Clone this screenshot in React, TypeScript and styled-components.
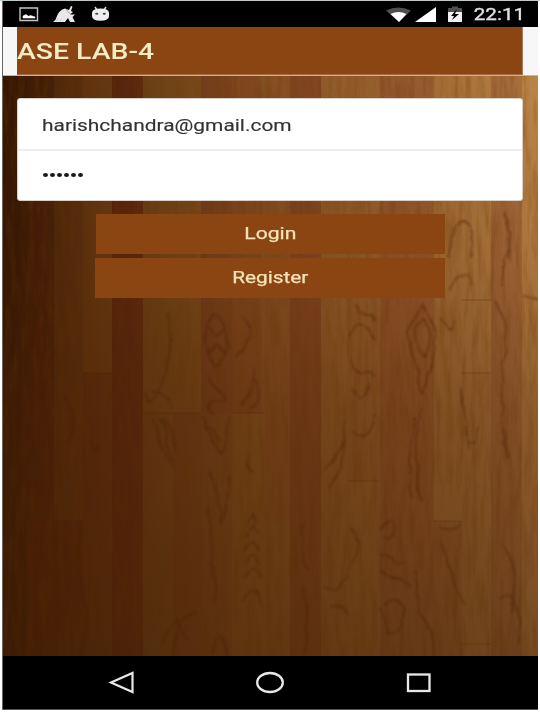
import React from "react";
import styled, { createGlobalStyle } from "styled-components";

const Global = createGlobalStyle`
  * { box-sizing: border-box; }
  html, body { margin: 0; background: #fff; }
  body { font-family: Roboto, "Liberation Sans", sans-serif; }
`;

const Page = styled.div`
  width: 540px;
  height: 712px;
  padding: 1px 2px 2px;
  overflow: hidden;
  background: #fff;
  box-shadow: inset 0 1px 0 #c3cbc8;
`;

const Phone = styled.div`
  display: flex;
  flex-direction: column;
  width: 536px;
  height: 709px;
  background: #000;
  border-left: 1px solid #6a6563;
  border-bottom: 1px solid #555;
`;

const StatusBar = styled.header`
  display: flex;
  align-items: center;
  justify-content: space-between;
  height: 26px;
  padding: 0 13px 0 16px;
  color: #e4e4e4;
`;

const Icons = styled.div<{ $gap: number }>`
  display: flex;
  align-items: center;
  gap: ${(p) => p.$gap}px;
`;

const Wide = styled.span<{ $origin?: string; $ratio?: number }>`
  display: inline-block;
  white-space: nowrap;
  transform: scaleX(${(p) => p.$ratio ?? 1.28});
  transform-origin: ${(p) => p.$origin ?? "left"} center;
`;

const Clock = styled.div`
  padding-top: 2px;
  font-size: 16.5px;
  line-height: 26px;
  -webkit-text-stroke: 0.3px #e4e4e4;
`;

const Header = styled.div`
  height: 49px;
  padding: 0 15px 0 14px;
  background: #f7f7f7;
  border-bottom: 1px solid #c3b6ab;
`;

const Title = styled.h1`
  height: 48px;
  margin: 0;
  padding-top: 1px;
  border-right: 1px solid #a87c5b;
  border-bottom: 1px solid #a06a43;
  background: #8b4513;
  color: #f5ebc5;
  font-size: 22px;
  font-weight: 500;
  line-height: 47px;
`;

const Content = styled.main`
  position: relative;
  height: 580px;
  padding: 22px 15px 0 14px;
  overflow: hidden;
  background: #5a2f10;
`;

const Backdrop = styled.svg`
  position: absolute;
  inset: 0;
  width: 535px;
  height: 580px;
`;

const Form = styled.form`
  position: relative;
  display: flex;
  flex-direction: column;
  align-items: center;
`;

const Fields = styled.div`
  width: 506px;
  height: 103px;
  border: 1px solid #d9cfc7;
  border-radius: 3px;
  background: #fff;
  color: #333;
`;

const Field = styled.div`
  display: flex;
  align-items: center;
  height: 50px;
  padding: 3px 0 0 24px;
  font-size: 16.5px;
  -webkit-text-stroke: 0.15px #333;

  & + & {
    padding-top: 0;
    border-top: 2px solid #ededed;
  }
`;

const Dots = styled.div`
  display: flex;
  gap: 2px;
  padding-left: 1px;
`;

const Dot = styled.i`
  width: 5px;
  height: 4px;
  border-radius: 50%;
  background: #181818;
`;

const Actions = styled.div`
  display: flex;
  flex-direction: column;
  align-items: flex-end;
  gap: 4px;
  margin-top: 13px;
`;

const Button = styled.button<{ $width: number }>`
  width: ${(p) => p.$width}px;
  height: 40px;
  padding: 0 0 2px;
  border: 0;
  background: #8b4513;
  color: #f5e3b8;
  font: 400 16.5px Roboto, sans-serif;
  -webkit-text-stroke: 0.25px #f5e3b8;
`;

const NavBar = styled.nav`
  display: flex;
  align-items: center;
  justify-content: space-between;
  flex: 1;
  padding: 0 106px 2px 105px;
`;

type Plank = [number, number, number, number, string];

/* x, y, width, height, tint */
const planks: Plank[] = [
  [0, 0, 24, 580, "#20090038"], [24, 0, 27, 445, "#35080028"],
  [51, 0, 29, 445, "#81500a16"], [80, 0, 29, 297, "#98661426"],
  [80, 297, 29, 148, "#61200a26"], [24, 445, 56, 135, "#52100038"],
  [80, 445, 29, 135, "#61280a26"], [109, 0, 31, 580, "#4404004a"],
  [140, 0, 30, 337, "#936c1020"], [170, 0, 28, 337, "#9a6a1220"],
  [140, 337, 30, 243, "#80601820"], [170, 337, 28, 243, "#681e0a20"],
  [198, 0, 31, 338, "#651a102c"], [229, 0, 30, 337, "#7b280a28"],
  [198, 338, 31, 242, "#74381222"], [229, 337, 34, 243, "#98661428"],
  [262, 0, 25, 445, "#8a3a1020"], [262, 445, 25, 135, "#88601220"],
  [287, 0, 31, 580, "#64180a48"], [318, 0, 26, 580, "#90601820"],
  [344, 0, 33, 405, "#8040101c"], [344, 405, 33, 175, "#90601a28"],
  [377, 0, 54, 580, "#72241038"], [431, 0, 28, 445, "#a06c2820"],
  [431, 445, 28, 135, "#6d281030"], [459, 0, 29, 297, "#b0803830"],
  [459, 297, 29, 283, "#98602820"], [488, 0, 31, 580, "#742b1940"],
  [519, 0, 17, 580, "#b5783840"],
];

const contours = [
  "M39 222 Q27 258 30 284 T39 319 Q51 290 48 263 Z M38 253 Q31 269 39 284 Q45 272 38 253Z M30 297 Q32 315 39 324 Q43 316 47 298 M39 0 Q31 21 38 60 T32 125 T43 206",
  "M211 240 C195 255 202 280 213 289 C230 280 227 242 211 240Z M205 253 L213 262 L221 253 M204 277 L213 270 L221 277 M205 300 C210 314 222 313 222 325 C208 322 197 335 211 338 M200 341 Q207 365 219 377 Q228 360 226 341 M205 349 Q212 361 218 364",
  "M236 241 C247 244 250 260 240 274 L233 281 M250 293 Q254 306 238 330 M253 301 Q260 320 248 335 M247 380 Q239 391 252 397",
  "M420 228 L404 257 Q407 278 420 318 Q434 277 431 251 Z M421 243 Q406 257 413 268 T421 281 Q429 265 427 252 Z M418 333 Q407 364 418 424 M412 340 Q402 380 409 420",
  "M352 230 C355 247 371 230 371 245 M347 260 C355 243 369 247 371 263 M347 284 Q352 302 360 296 T371 300 M350 312 Q359 334 366 308 M350 354 Q366 371 371 338",
  "M165 238 Q170 290 157 312 T142 318 M147 316 Q166 315 171 335 M150 342 Q159 370 169 394 M155 341 Q169 362 168 388 M160 343 Q174 361 174 374",
  "M444 180 Q451 143 461 145 T469 181 M446 213 Q464 188 469 209 M436 242 Q449 265 453 242 M461 350 C466 374 473 373 475 349 M457 310 Q464 348 466 374",
  "M500 137 Q513 155 506 172 T499 212 M494 225 Q507 251 501 290 T504 383 M510 156 Q501 167 508 184 M520 220 Q532 225 536 224",
  "M244 450 L250 438 L255 449 M243 462 L250 450 L256 460 M242 475 Q250 459 257 475 M242 488 Q250 469 257 488 M242 502 Q251 481 258 502 M239 526 Q253 500 260 531",
  "M205 395 Q219 423 218 445 T228 400 M204 430 Q210 475 212 525 M160 570 Q173 522 183 565 M170 580 Q174 540 193 533 M210 580 Q217 541 225 580",
  "M377 455 Q388 439 391 452 T380 460 M377 480 C391 474 390 496 402 486 M377 495 C391 507 397 495 407 513 M383 530 Q404 510 399 549 Q384 574 379 532 M414 494 Q410 526 422 548 T430 579",
  "M322 512 Q337 519 345 500 M324 529 Q341 526 346 540 M322 394 Q335 380 342 364 M326 410 Q342 389 343 346 M350 450 Q362 470 344 493",
  "M435 451 Q448 459 456 449 M438 468 Q454 512 461 532 M500 467 Q518 502 509 535 M496 523 Q519 506 515 568 M300 448 Q296 490 307 494 M300 510 Q308 542 301 580",
  "M13 460 Q33 490 19 524 T35 580 M78 450 Q70 484 80 515 T78 580 M5 455 C26 458 20 472 5 477 M60 320 Q80 346 65 367 M87 365 Q91 381 95 366",
];

const Wood = () => (
  <Backdrop viewBox="0 0 535 580" preserveAspectRatio="none" aria-hidden="true">
    <defs>
      <linearGradient id="across">
        <stop offset="0" stopColor="#3a1a05" />
        <stop offset=".2" stopColor="#5c3012" />
        <stop offset=".42" stopColor="#7d4c20" />
        <stop offset=".65" stopColor="#955f2e" />
        <stop offset=".88" stopColor="#aa743e" />
        <stop offset="1" stopColor="#be8a4f" />
      </linearGradient>
      <linearGradient id="down" x1="0" y1="0" x2="0" y2="1">
        <stop offset="0" stopColor="#4b2105" stopOpacity="0" />
        <stop offset=".3" stopColor="#4b2105" stopOpacity=".14" />
        <stop offset=".58" stopColor="#4b2105" stopOpacity=".4" />
        <stop offset="1" stopColor="#432004" stopOpacity=".58" />
      </linearGradient>
      <filter id="grain" x="0" y="0" width="100%" height="100%">
        <feTurbulence type="fractalNoise" baseFrequency=".16 .022" numOctaves="4" seed="12" />
        <feColorMatrix values="0 0 0 0 .16  0 0 0 0 .04  0 0 0 0 0  1.8 0 0 0 -.72" />
      </filter>
      <filter id="knots" x="0" y="0" width="100%" height="100%">
        <feTurbulence type="fractalNoise" baseFrequency=".05" numOctaves="3" seed="4" result="n" />
        <feDisplacementMap in="SourceGraphic" in2="n" scale="8" xChannelSelector="R" yChannelSelector="G" />
        <feGaussianBlur stdDeviation=".8" />
      </filter>
    </defs>
    <rect width="535" height="580" fill="url(#across)" />
    {planks.map(([x, y, w, h, tint], i) => (
      <rect key={i} x={x} y={y} width={w} height={h} fill={tint} />
    ))}
    <rect width="535" height="580" filter="url(#grain)" opacity=".38" />
    <g fill="none" stroke="#421800" strokeWidth="1.8" opacity=".42" filter="url(#knots)">
      {contours.map((d) => <path key={d} d={d} />)}
    </g>
    <path
      d="M80 297H109M140 337H198M229 337H262M51 445H80M431 445H459M459 224H488M459 297H488M344 405H377M459 568H488"
      stroke="#421800"
      opacity=".3"
    />
    <rect width="535" height="580" fill="url(#down)" />
  </Backdrop>
);

const PictureIcon = () => (
  <svg width="20" height="16" viewBox="0 0 20 16">
    <path d="M1 2H18.5V14.5H1Z" fill="none" stroke="#c5c5c5" strokeWidth="1.4" />
    <path d="M4 12V10L7 8.5L9.5 10.3L11.5 9.5L16 11V12Z" fill="#fff" stroke="#fff" strokeWidth=".6" />
  </svg>
);

const CleanerIcon = () => (
  <svg width="24" height="18" viewBox="0 0 24 18">
    <path d="M0 17 Q3 15 4 11 Q6 5 12 3.5 L16 5 L18 1 L19.5 1.5 L18 6 L20 7 L17 9.5 H22 L19.5 12 L22 17 H17 L15 13 L12 17Z" fill="#e8e8e8" />
    <path d="M13 4 L17 9" stroke="#999" strokeWidth=".8" />
    <path d="M5 13 L3.5 16 M9 13.5 L7 16" stroke="#bbb" strokeWidth=".7" />
  </svg>
);

const AndroidIcon = () => (
  <svg width="19" height="16" viewBox="0 0 19 16">
    <path d="M4 1 L6 4 M15 1 L13 4" stroke="#ddd" strokeWidth="1.5" />
    <path d="M1 7 Q1 2.5 9.5 2.5 Q18 2.5 18 7 V10 Q18 14.5 9.5 14.8 Q1 14.5 1 10Z" fill="#eee" />
    <ellipse cx="5.7" cy="7.8" rx="1.6" ry="1" fill="#444" />
    <ellipse cx="13.3" cy="7.8" rx="1.6" ry="1" fill="#444" />
  </svg>
);

const SignalIcons = () => (
  <svg width="78" height="18" viewBox="0 0 78 18">
    <path d="M1 5.5 Q13-.5 26 5.5 L14 17Z" fill="#4f4f4f" />
    <path d="M5.5 9 Q13.5 5 21.5 9 L14 17Z" fill="#fff" />
    <path d="M30 17 L51 2V17Z" fill="#fff" />
    <path d="M63 7V3H67V1.5H73V3H77V7Z" fill="#505050" />
    <path d="M63 7 H77V17H63Z" fill="#f1f1f1" />
    <path d="M72 4 L66 11H69L67 15L74 9H70Z" fill="#000" />
  </svg>
);

export default function App() {
  return (
    <>
      <Global />
      <Page>
        <Phone>
          <StatusBar>
            <Icons $gap={14}>
              <PictureIcon />
              <CleanerIcon />
              <AndroidIcon />
            </Icons>
            <Icons $gap={21}>
              <SignalIcons />
              <Clock><Wide $origin="right" $ratio={1.25}>22:11</Wide></Clock>
            </Icons>
          </StatusBar>
          <Header><Title><Wide $ratio={1.29}>ASE LAB-4</Wide></Title></Header>
          <Content>
            <Wood />
            <Form>
              <Fields>
                <Field><Wide $ratio={1.267}>harishchandra@gmail.com</Wide></Field>
                <Field>
                  <Dots>{Array.from({ length: 6 }, (_, i) => <Dot key={i} />)}</Dots>
                </Field>
              </Fields>
              <Actions>
                <Button type="button" $width={349}><Wide $origin="center">Login</Wide></Button>
                <Button type="button" $width={350}><Wide $origin="center" $ratio={1.26}>Register</Wide></Button>
              </Actions>
            </Form>
          </Content>
          <NavBar>
            <svg width="26" height="24" viewBox="0 0 26 24">
              <path d="M3 12.5 L24.5 3V22Z" fill="none" stroke="#e8e8e8" strokeWidth="2.2" />
            </svg>
            <svg width="30" height="24" viewBox="0 0 30 24">
              <ellipse cx="15" cy="12.5" rx="12.8" ry="9.5" fill="none" stroke="#e8e8e8" strokeWidth="2.3" />
            </svg>
            <svg width="26" height="24" viewBox="0 0 26 24">
              <rect x="2" y="4.5" width="21.5" height="16.5" fill="none" stroke="#e8e8e8" strokeWidth="2.3" />
            </svg>
          </NavBar>
        </Phone>
      </Page>
    </>
  );
}
